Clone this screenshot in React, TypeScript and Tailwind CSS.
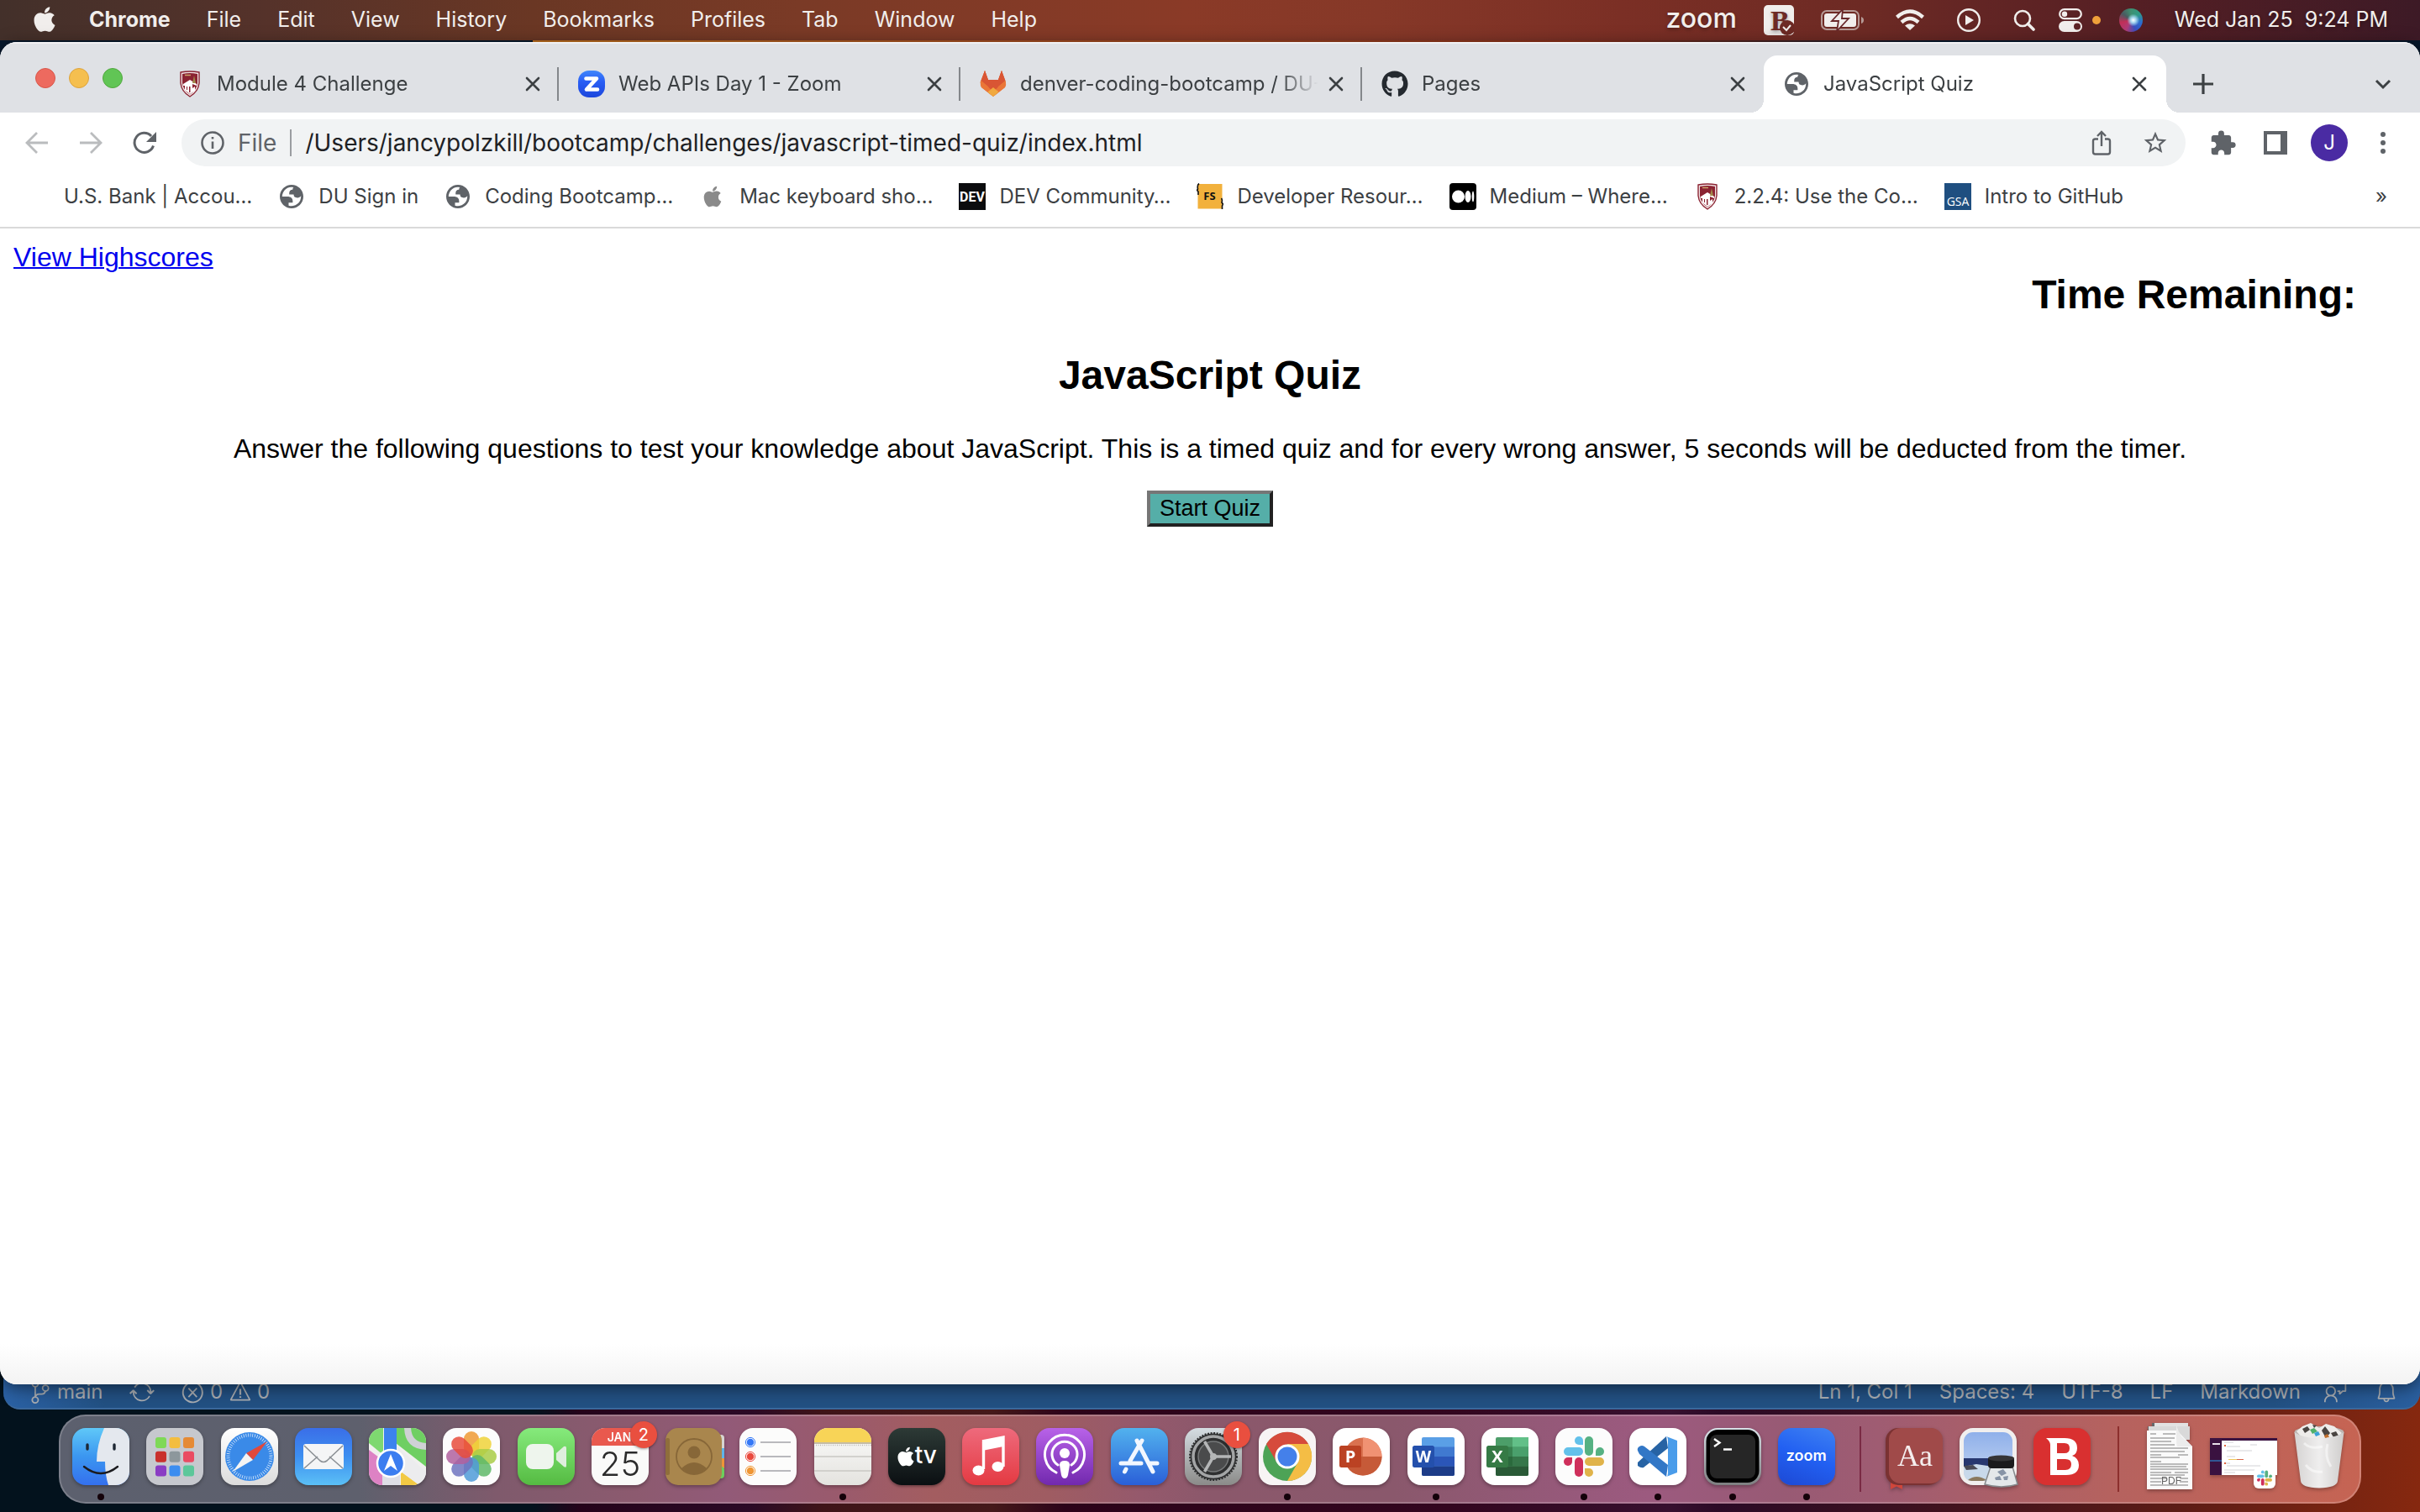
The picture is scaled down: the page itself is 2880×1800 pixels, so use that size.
import React from "react";
import { FaApple, FaGithub } from "react-icons/fa";
import { MdExtension, MdStarBorder } from "react-icons/md";
import { VscBell, VscError, VscFeedback, VscSourceControl, VscSync, VscWarning } from "react-icons/vsc";

/* ---------- small icons ---------- */

const Globe = () => (
  <svg viewBox="2 2 20 20" className="size-7" fill="#5f6368">
    <path
      fillRule="evenodd"
      d="M2 12C2 6.48 6.47 2 12 2s10 4.48 10 10-4.48 10-10 10S2 17.52 2 12zm2 0h4.4c3.407.022 4.922 1.73 4.543 5.127H9.488v2.47a8.004 8.004 0 0 0 10.498-8.083C19.327 12.504 18.332 13 17 13c-2.137 0-3.206-.916-3.206-2.75h-3.748c-.274-2.728.683-4.092 2.87-4.092 0-.975.327-1.597.811-1.97A8.004 8.004 0 0 0 4 12z"
    />
  </svg>
);

const Shield = () => (
  <svg viewBox="0 0 24 32" className="h-8 w-6">
    <path d="M1 2Q12 0 23 2V15Q22 25 12 31Q2 25 1 15Z" fill="#f3e6e6" stroke="#8b2332" strokeWidth="1.4" />
    <path d="M3 4Q12 2 21 4V15Q20 23 12 28.500Q4 23 3 15Z" fill="#8b2332" />
    <path d="M4 16L12 11L20 16V18L15 16V21L18 19V24L12 28L6 23V18L4 18Z" fill="#fff" />
    <path d="M11 19h1.500v7H11zM8 19h1v4H8z" fill="#8b2332" />
    <path d="M17 6l2 9h-4z" fill="#a08a4a" />
    <path d="M6 5.500h7" stroke="#c9a36a" strokeWidth="1.500" />
  </svg>
);

const ZoomFavicon = () => (
  <svg viewBox="0 0 32 32" className="size-8">
    <defs>
      <linearGradient id="zf" x1="0" y1="0" x2="0" y2="1">
        <stop offset="0" stopColor="#3f86fb" />
        <stop offset="0.4" stopColor="#2a5ff5" />
        <stop offset="1" stopColor="#1c46dc" />
      </linearGradient>
    </defs>
    <rect width="32" height="32" rx="13" fill="url(#zf)" />
    <path d="M9.500 9.500H22L10 22.500H23" fill="none" stroke="#fff" strokeWidth="4.600" strokeLinejoin="round" strokeLinecap="round" />
  </svg>
);

const Gitlab = () => (
  <svg viewBox="0 0 32 32" className="size-8">
    <path d="M6 0L2 12.500H10.500ZM26 0L21.500 12.500H30Z" fill="#d84f31" />
    <path d="M6 0L10 11H22L26 0L31 14L30 20L16 31L2 20L0.500 14Z" fill="#ea7638" />
    <path d="M6 0L10 11H22L26 0L30.500 12L16 25L1.500 12Z" fill="#d95534" />
    <path d="M1.500 12L10 19L16 31L2 20Q0 17 1.500 12ZM30.500 12L22 19L16 31L30 20Q32 17 30.500 12Z" fill="#ea7638" />
    <path d="M16 20L22.500 25.500L16 31L9.500 25.500Z" fill="#f0a93f" />
  </svg>
);

const DevIcon = () => (
  <svg viewBox="0 0 32 32" className="size-8">
    <rect width="32" height="32" fill="#0b0c0e" />
    <text x="16" y="22" textAnchor="middle" fill="#fff" className="font-['Roboto'] text-[16px] font-bold">
      DEV
    </text>
  </svg>
);

const FsIcon = () => (
  <svg viewBox="0 0 32 32" className="size-8">
    <rect x="1.500" y="1" width="29" height="29.500" fill="#f2b13c" />
    <path d="M3 0.500Q0.500 2 1.500 7L0.500 8.500L2 10V14M29.500 18Q31 20 30 23L31.500 25L30.500 27V31" fill="none" stroke="#111" strokeWidth="1.600" />
    <text x="15.500" y="20" textAnchor="middle" fill="#111" className="font-['Open_Sans'] text-[13px] font-bold">
      FS
    </text>
  </svg>
);

const MediumIcon = () => (
  <svg viewBox="0 0 32 32" className="size-8">
    <rect width="32" height="32" rx="4" fill="#000" />
    <circle cx="10.500" cy="16" r="7.500" fill="#fff" />
    <ellipse cx="22" cy="16" rx="3.500" ry="7" fill="#fff" />
    <ellipse cx="28" cy="16" rx="1.300" ry="6.500" fill="#fff" />
  </svg>
);

const GsaIcon = () => (
  <svg viewBox="0 0 32 32" className="size-8">
    <rect width="32" height="32" fill="#1f4f80" />
    <text x="16" y="27" textAnchor="middle" fill="#fff" className="font-['Open_Sans'] text-[14px]">
      GSA
    </text>
  </svg>
);

const Close = () => (
  <svg viewBox="0 0 20 20" className="size-5" stroke="#3c4043" strokeWidth="2.600" strokeLinecap="round">
    <path d="M3 3L17 17M17 3L3 17" />
  </svg>
);

const Arrow = ({ flip = false }: { flip?: boolean }) => (
  <svg viewBox="0 0 28 28" className="size-7" fill="none" stroke="#babcbe" strokeWidth="2.800">
    {flip ? <path d="M1 14H26M14 2L26 14L14 26" /> : <path d="M27 14H2M14 2L2 14L14 26" />}
  </svg>
);

const Reload = () => (
  <svg viewBox="0 0 28 28" className="size-7">
    <path d="M24.500 17.500A11.500 11.500 0 1 1 22 6" fill="none" stroke="#5f6368" strokeWidth="3" />
    <path d="M28 1V13H16Z" fill="#5f6368" />
  </svg>
);

const Info = () => (
  <svg viewBox="0 0 28 28" className="size-7" fill="none" stroke="#5f6368">
    <circle cx="14" cy="14" r="12.500" strokeWidth="2.600" />
    <path d="M14 12.500V21" strokeWidth="2.600" />
    <path d="M14 7V9.600" strokeWidth="2.600" />
  </svg>
);

const Share = () => (
  <svg viewBox="0 0 24 30" className="h-[30px] w-6" fill="none" stroke="#5f6368" strokeWidth="2.400">
    <path d="M8 10.500H4.500Q2 10.500 2 13V26Q2 28.500 4.500 28.500H19.500Q22 28.500 22 26V13Q22 10.500 19.500 10.500H16M12 19V2M7 7L12 2L17 7" />
  </svg>
);

/* ---------- menu bar ---------- */

const menus = ["File", "Edit", "View", "History", "Bookmarks", "Profiles", "Tab", "Window", "Help"];

const MenuBar = () => (
  <header className="flex h-12 items-center justify-between bg-[linear-gradient(90deg,#43302a_0%,#55322a_11%,#6a3724_22%,#7a3a26_33%,#8a3a27_49%,#863828_57%,#7b2f25_67%,#6d2a24_77%,#551f24_88%,#3d1a26_100%)] pr-[38px] pl-[39px] text-[25px] leading-8 text-[#f1eeec] [text-shadow:0_2px_4px_rgba(0,0,0,0.35)]">
    <nav className="flex items-center gap-[43px] pb-[2px]" aria-label="Menu bar">
      <FaApple className="-mr-1 h-[34px] w-7" />
      <button className="font-bold">Chrome</button>
      {menus.map((m) => (
        <button key={m}>{m}</button>
      ))}
    </nav>
    <div className="flex items-center">
      <span className="mr-8 flex w-20 justify-end pb-1 text-[32px] font-medium">zoom</span>
      <svg viewBox="0 0 36 36" className="mr-8 size-9">
        <rect width="36" height="36" rx="5" fill="#f1eeec" />
        <text x="8" y="30" fill="#6d2a24" className="font-['Liberation_Serif'] text-[34px] font-bold">
          B
        </text>
        <circle cx="28" cy="27" r="9" fill="#6d2a24" />
        <path d="M23 26L27 30L32 24" fill="none" stroke="#f1eeec" strokeWidth="2" />
      </svg>
      <svg viewBox="0 0 51 26" className="mr-[38px] h-[26px] w-[51px]">
        <rect x="1" y="2" width="44" height="22" rx="6" fill="none" stroke="#b59a96" strokeWidth="2" />
        <path d="M48 9Q51 10 51 13Q51 16 48 17Z" fill="#b59a96" />
        <rect x="4" y="5" width="38" height="16" rx="3" fill="#f1eeec" />
        <path d="M26 0L13 14H21L19 26L33 11H25Z" fill="#f1eeec" stroke="#68282a" strokeWidth="1.800" />
      </svg>
      <svg viewBox="0 0 34 26" className="mr-[39px] h-[26px] w-[34px]" fill="none" stroke="#f1eeec" strokeWidth="4.400">
        <path d="M1.500 9.500Q17 -4.500 32.500 9.500M7 15.500Q17 6.500 27 15.500" />
        <path d="M17 25L11 19.500Q17 15 23 19.500Z" fill="#f1eeec" stroke="none" />
      </svg>
      <svg viewBox="0 0 28 28" className="mr-[39px] size-7">
        <circle cx="14" cy="14" r="12.800" fill="none" stroke="#f1eeec" strokeWidth="2.400" />
        <path d="M10 8L20 14L10 20Z" fill="#f1eeec" />
      </svg>
      <svg viewBox="0 0 26 26" className="mr-7 size-[26px]" fill="none" stroke="#f1eeec">
        <circle cx="11" cy="11" r="9" strokeWidth="2.600" />
        <path d="M17.500 17.500L24 24" strokeWidth="3.600" strokeLinecap="round" />
      </svg>
      <svg viewBox="0 0 28 28" className="mr-3 size-7">
        <rect x="1.200" y="1.200" width="25.600" height="11" rx="5.500" fill="none" stroke="#f1eeec" strokeWidth="2.200" />
        <circle cx="7" cy="6.700" r="3.200" fill="#f1eeec" />
        <rect y="15" width="28" height="13" rx="6.500" fill="#f1eeec" />
        <circle cx="22" cy="21.500" r="4" fill="#5d2326" />
      </svg>
      <span className="mr-[22px] size-[10px] rounded-full bg-[#f0a03a]" />
      <span className="mr-[38px] size-7 rounded-full bg-[radial-gradient(circle_at_60%_50%,#ffffff_0%,#a8d8f0_14%,transparent_34%),conic-gradient(from_0deg,#3f8f70,#2f9b85,#2b6fd0,#3a4fc0,#b03c78,#c02f58,#4a5a60,#3f8f70)]" />
      <time className="pb-[2px] whitespace-pre">{"Wed Jan 25  9:24 PM"}</time>
    </div>
  </header>
);

/* ---------- browser chrome ---------- */

const tabs = [
  { title: "Module 4 Challenge", icon: <Shield /> },
  { title: "Web APIs Day 1 - Zoom", icon: <ZoomFavicon /> },
  { title: "denver-coding-bootcamp / DU-", icon: <Gitlab /> },
  { title: "Pages", icon: <FaGithub className="size-8 text-[#24292f]" />, last: true },
  { title: "JavaScript Quiz", icon: <Globe />, active: true },
];

const TabStrip = () => (
  <div className="flex h-[84px] border-t-2 border-[#f0f0f2] bg-[#dfe1e5]">
    <div className="mt-[29px] ml-[42px] flex gap-4">
      <button aria-label="Close window" className="size-6 rounded-full border border-[#d8564a] bg-[#ed6a5f]" />
      <button aria-label="Minimise window" className="size-6 rounded-full border border-[#dda33c] bg-[#f5bf4f]" />
      <button aria-label="Zoom window" className="size-6 rounded-full border border-[#51a83e] bg-[#61c555]" />
    </div>
    <div role="tablist" className="mt-[14px] ml-[41px] flex w-[2391px] shrink">
      {tabs.map((t) => (
        <div
          key={t.title}
          className={
            t.active
              ? "relative flex min-w-0 flex-1 items-center rounded-t-2xl bg-white pr-[22px] pl-[23px]"
              : "relative flex min-w-0 flex-1 items-center pr-[21px] pl-[23px]"
          }
        >
          {t.active && (
            <>
              <span className="absolute bottom-0 -left-4 size-4 bg-[radial-gradient(circle_at_0_0,transparent_16px,#fff_16px)]" />
              <span className="absolute -right-4 bottom-0 size-4 bg-[radial-gradient(circle_at_100%_0,transparent_16px,#fff_16px)]" />
            </>
          )}
          <button role="tab" aria-selected={!!t.active} className="flex min-w-0 flex-1 items-center gap-4 text-left">
            <span className="flex w-8 shrink-0 justify-center">{t.icon}</span>
            <span className="min-w-0 flex-1 overflow-hidden text-[24px] leading-8 whitespace-nowrap text-[#3c4043] [mask-image:linear-gradient(90deg,#000_86%,transparent_99%)]">
              {t.title}
            </span>
          </button>
          <button aria-label={"Close " + t.title} className="ml-2">
            <Close />
          </button>
          {!t.active && !t.last && <span className="absolute right-0 h-10 w-[2px] bg-[#84878b]" />}
        </div>
      ))}
    </div>
    <div className="mt-[14px] flex flex-1 items-center justify-between pr-[34px] pl-8">
      <button aria-label="New tab">
        <svg viewBox="0 0 24 24" className="size-6" stroke="#3c4043" strokeWidth="3.200">
          <path d="M0 12H24M12 0V24" />
        </svg>
      </button>
      <button aria-label="Search tabs">
        <svg viewBox="0 0 20 20" className="size-5" fill="none" stroke="#3c4043" strokeWidth="3">
          <path d="M2 6L10 14L18 6" />
        </svg>
      </button>
    </div>
  </div>
);

const Toolbar = () => (
  <div className="flex h-[72px] items-center bg-white">
    <button aria-label="Back" className="ml-[30px]">
      <Arrow />
    </button>
    <button aria-label="Forward" className="ml-9">
      <Arrow flip />
    </button>
    <button aria-label="Reload" className="ml-9">
      <Reload />
    </button>
    <div className="ml-[30px] flex h-14 flex-1 items-center rounded-full bg-[#f1f3f4] pr-5 pl-[23px] text-[28px]">
      <Info />
      <label htmlFor="address" className="ml-4 text-[#5f6368]">
        File
      </label>
      <span className="mx-4 h-8 w-[2px] bg-[#9a9da1]" />
      <input id="address" className="min-w-0 flex-1 bg-transparent text-[#202124] outline-none" defaultValue="/Users/jancypolzkill/bootcamp/challenges/javascript-timed-quiz/index.html" />
      <button aria-label="Share">
        <Share />
      </button>
      <button aria-label="Bookmark" className="ml-9">
        <MdStarBorder className="size-8 text-[#5f6368]" />
      </button>
    </div>
    <button aria-label="Extensions" className="ml-7">
      <MdExtension className="size-[33px] text-[#5f6368]" />
    </button>
    <button aria-label="Side panel" className="ml-8">
      <span className="block h-7 w-7 border-4 border-r-8 border-[#5f6368]" />
    </button>
    <button aria-label="Profile" className="ml-7 flex size-11 items-center justify-center rounded-full bg-[#4a2ba3] text-[24px] text-white">
      J
    </button>
    <button aria-label="Menu" className="mr-[41px] ml-[39px] flex flex-col gap-1">
      <span className="size-[6px] rounded-full bg-[#5f6368]" />
      <span className="size-[6px] rounded-full bg-[#5f6368]" />
      <span className="size-[6px] rounded-full bg-[#5f6368]" />
    </button>
  </div>
);

const bookmarks = [
  { title: "U.S. Bank | Accou…", icon: null },
  { title: "DU Sign in", icon: <Globe /> },
  { title: "Coding Bootcamp…", icon: <Globe /> },
  { title: "Mac keyboard sho…", icon: <FaApple className="size-7 text-[#8a8a8a]" /> },
  { title: "DEV Community…", icon: <DevIcon /> },
  { title: "Developer Resour…", icon: <FsIcon /> },
  { title: "Medium – Where…", icon: <MediumIcon /> },
  { title: "2.2.4: Use the Co…", icon: <Shield /> },
  { title: "Intro to GitHub", icon: <GsaIcon /> },
];

const BookmarksBar = () => (
  <div className="flex h-[66px] items-center border-b-2 border-[#dadada] bg-white pb-2 pl-7 text-[24px] leading-8 text-[#3c4043]">
    <nav className="flex flex-1 gap-[31px] whitespace-nowrap" aria-label="Bookmarks">
      {bookmarks.map((b) => (
        <a key={b.title} href="#" className="flex items-center gap-4">
          <span className="flex w-8 justify-center">{b.icon}</span>
          {b.title}
        </a>
      ))}
    </nav>
    <button aria-label="More bookmarks" className="mr-[39px]">
      »
    </button>
  </div>
);

const Page = () => (
  <main className="flex flex-1 flex-col bg-[linear-gradient(0deg,#f3f3f3_0px,#fff_48px)] p-4 font-['Liberation_Sans',Arial,sans-serif] text-[32px] leading-9 text-black">
    <a href="#" className="self-start text-[#0000ee] underline decoration-2">
      View Highscores
    </a>
    <h2 className="mr-[60px] self-end text-[48px] leading-[54px] font-bold">Time Remaining:</h2>
    <h2 className="mt-[42px] self-center text-[48px] leading-[54px] font-bold">JavaScript Quiz</h2>
    <p className="mt-[42px] self-center">
      Answer the following questions to test your knowledge about JavaScript. This is a timed quiz and for every wrong answer, 5 seconds will be deducted from the timer.
    </p>
    <button className="mt-8 self-center border-4 border-t-[#767676] border-r-[#212121] border-b-[#212121] border-l-[#767676] bg-[#55aea8] px-[11px] py-[2px] text-[27px] leading-[31px]">
      Start Quiz
    </button>
  </main>
);

/* ---------- editor status bar peeking out under the browser ---------- */

const StatusBar = () => (
  <footer className="-mt-[30px] ml-1 flex h-[60px] items-end justify-between rounded-b-[20px] border-b-2 border-[#3a689c] bg-[linear-gradient(90deg,#2b62a6_0px,#225082_120px,#225082_2700px,#2a5f9f_100%)] pr-[26px] pb-[3px] pl-[30px] text-[24px] leading-8 text-[#a9adb2]">
    <div className="flex items-center">
      <VscSourceControl className="size-7" />
      <span className="ml-[6px] w-[86px]">main</span>
      <VscSync className="mr-[31px] size-[30px]" />
      <VscError className="size-[29px]" />
      <span className="ml-[6px] w-[22px]">0</span>
      <VscWarning className="size-7" />
      <span className="ml-[6px]">0</span>
    </div>
    <div className="flex items-center gap-8">
      <span>Ln 1, Col 1</span>
      <span>Spaces: 4</span>
      <span>UTF-8</span>
      <span>LF</span>
      <span className="-mr-1">Markdown</span>
      <VscFeedback className="size-7" />
      <VscBell className="size-7" />
    </div>
  </footer>
);

/* ---------- dock ---------- */

const Tile = ({ children, fill, stops, id }: { children?: React.ReactNode; fill?: string; stops?: string[]; id: string }) => (
  <svg viewBox="0 0 68 68" className="size-[68px] shrink-0 overflow-visible drop-shadow-[0_2px_2px_rgba(0,0,0,0.3)]">
    <defs>
      <clipPath id={id + "c"}>
        <rect width="68" height="68" rx="16" />
      </clipPath>
      {stops && (
        <linearGradient id={id} x1="0" y1="0" x2="0" y2="1">
          {stops.map((s, i) => (
            <stop key={s} offset={i / (stops.length - 1)} stopColor={s} />
          ))}
        </linearGradient>
      )}
    </defs>
    <g clipPath={`url(#${id}c)`}>
      <rect width="68" height="68" fill={stops ? `url(#${id})` : fill} />
      {children}
    </g>
  </svg>
);

const SlackMark = () => (
  <>
    <g fill="#63c1ea">
      <path d="M33 20H28A5 5 0 1 1 33 15Z" />
      <rect x="10" y="23" width="23" height="10" rx="5" />
    </g>
    <g fill="#56b183">
      <rect x="35" y="10" width="10" height="23" rx="5" />
      <path d="M48 33V28A5 5 0 1 1 53 33Z" />
    </g>
    <g fill="#e0b34a">
      <rect x="35" y="35" width="23" height="10" rx="5" />
      <path d="M35 48H40A5 5 0 1 1 35 53Z" />
    </g>
    <g fill="#cf2f5b">
      <path d="M20 35V40A5 5 0 1 1 15 35Z" />
      <rect x="23" y="35" width="10" height="23" rx="5" />
    </g>
  </>
);

const Finder = () => (
  <Tile id="finder" stops={["#5fc8f8", "#3b96f0", "#3470ee"]}>
    <path d="M38 0Q29 20 29 40H39Q39 56 43 68H68V0Z" fill="#e4e8ee" />
    <path d="M18 20V25M50 20V25" stroke="#1d2733" strokeWidth="3.400" strokeLinecap="round" />
    <path d="M14 46Q34 62 54 46" fill="none" stroke="#1b1b1f" strokeWidth="2.400" strokeLinecap="round" />
  </Tile>
);

const padColors = ["#7ed957", "#f3bd3f", "#e58a35", "#c9302c", "#8d979c", "#ea4b62", "#8a3cc4", "#3b8df0", "#5cc79a"];
const Launchpad = () => (
  <Tile id="pad" fill="#c6c8ce">
    {padColors.map((c, i) => (
      <rect key={c} x={11 + (i % 3) * 16.5} y={11 + Math.floor(i / 3) * 16.8} width="13" height="13" rx="3" fill={c} />
    ))}
  </Tile>
);

const Safari = () => (
  <Tile id="safari" stops={["#ffffff", "#dcdcdc"]}>
    <circle cx="34" cy="34" r="29" fill="#3a8ae8" />
    <circle cx="34" cy="34" r="25.500" fill="none" stroke="#d7e8fb" strokeWidth="4" strokeDasharray="0.800 1.870" />
    <path d="M55 16L38 38L30 30Z" fill="#e0483c" />
    <path d="M14 52L38 38L30 30Z" fill="#f4f4f4" />
  </Tile>
);

const Mail = () => (
  <Tile id="mail" stops={["#3a6ee8", "#3d8ff0", "#5bc0f6"]}>
    <rect x="10" y="19" width="48" height="30" rx="3" fill="#f4f5f6" />
    <path d="M11 48L27 34M57 48L41 34M11 21L30 39Q34 42 38 39L57 21" fill="none" stroke="#8b9095" strokeWidth="1.600" />
  </Tile>
);

const Maps = () => (
  <Tile id="maps" fill="#f0f0ee">
    <path d="M32 0H68V46L32 18Z" fill="#6fcf62" />
    <path d="M0 8V0H17V32L0 18Z" fill="#7ed870" />
    <path d="M0 26L16 38V68H0Z" fill="#dd82c4" />
    <path d="M38 68V52L60 68Z" fill="#f2c944" />
    <path d="M34 22L68 52V68H60L34 48Z" fill="#ececee" />
    <path d="M46 -2Q46 22 70 22" fill="none" stroke="#cfd1d5" strokeWidth="8" />
    <rect x="18" width="15" height="36" fill="#3c82ee" />
    <rect x="16" y="50" width="21" height="18" fill="#dedee6" />
    <circle cx="26" cy="42" r="16" fill="#3b7df0" stroke="#fff" strokeWidth="2.500" />
    <path d="M26 31L34 51L26 45L18 51Z" fill="#fff" />
  </Tile>
);

const petals = ["#ef9a35", "#efd23a", "#a9cc46", "#5fb868", "#4f9bd8", "#6f74c0", "#b0609f", "#e84c3c"];
const Photos = () => (
  <Tile id="photos" fill="#fcfcfc">
    {petals.map((c, i) => (
      <rect key={c} x="25" y="4" width="18" height="29" rx="9" fill={c} fillOpacity="0.850" transform={`rotate(${i * 45} 34 34)`} />
    ))}
  </Tile>
);

const Facetime = () => (
  <Tile id="ft" stops={["#86ea7c", "#55bb42"]}>
    <rect x="10" y="19" width="33" height="30" rx="8" fill="#eef5ed" />
    <path d="M46 30L55 22Q58 21 58 24V45Q58 48 55 46L46 38Z" fill="#dfeedd" />
  </Tile>
);

const Calendar = () => (
  <Tile id="cal" fill="#fafaf9">
    <rect width="68" height="21" fill="#e9594e" />
    <text x="33" y="16" textAnchor="middle" fill="#fff" className="font-['Inter'] text-[14px] font-semibold">
      JAN
    </text>
    <text x="34" y="57" textAnchor="middle" fill="#2b2b2b" className="font-['Inter'] text-[40px] font-light">
      25
    </text>
  </Tile>
);

const Contacts = () => (
  <svg viewBox="0 0 68 68" className="size-[68px] overflow-visible drop-shadow-[0_2px_2px_rgba(0,0,0,0.3)]">
    <rect x="56" y="8" width="14" height="26" rx="4" fill="#d7d5d2" />
    <rect x="56" y="24" width="14" height="12" fill="#5fb4ea" />
    <rect x="56" y="36" width="14" height="12" fill="#ee9438" />
    <rect x="56" y="46" width="14" height="14" rx="4" fill="#6ccf5c" />
    <rect width="67" height="68" rx="15" fill="#a9864d" />
    <rect width="5" height="44" y="12" rx="2" fill="#8f6e3b" />
    <circle cx="34" cy="34" r="21" fill="none" stroke="#876738" strokeWidth="1.800" />
    <circle cx="34" cy="29" r="7.500" fill="#876738" />
    <path d="M19 48Q34 34 49 48Q34 62 19 48Z" fill="#876738" />
  </svg>
);

const Reminders = () => (
  <Tile id="rem" fill="#fcfcfb">
    {["#3478f6", "#e9493d", "#ef9634"].map((c, i) => (
      <g key={c}>
        <circle cx="13" cy={17 + i * 17} r="5" fill={c} stroke="#fff" strokeWidth="1.500" />
        <circle cx="13" cy={17 + i * 17} r="5.600" fill="none" stroke={c} />
        <path d={`M25 ${17 + i * 17}H61`} stroke="#b9b9bd" strokeWidth="1.800" />
      </g>
    ))}
  </Tile>
);

const Notes = () => (
  <Tile id="notes" stops={["#fbfbfa", "#e4e3df"]}>
    <rect width="68" height="17" fill="#f8d457" />
    <path d="M0 18H68" stroke="#b5a98a" strokeWidth="1.500" />
    <path d="M2 20.500H68" stroke="#bbb9b2" strokeWidth="1.500" strokeDasharray="1 1.500" />
    <path d="M0 34H68M0 51H68" stroke="#c9c8c4" strokeWidth="1.500" />
  </Tile>
);

const AppleTv = () => (
  <span className="flex size-[68px] items-center justify-center rounded-2xl bg-[linear-gradient(#2d3a36,#0b0f12)] text-white shadow-[0_2px_3px_rgba(0,0,0,0.3)]">
    <FaApple className="h-[26px] w-[22px]" />
    <span className="pb-1 text-[28px] leading-8 font-medium">tv</span>
  </span>
);

const Music = () => (
  <Tile id="music" stops={["#ee6a7c", "#e43a42"]}>
    <path d="M24 16L49 11V46M25.500 49V16" stroke="#fff" strokeWidth="3.400" fill="none" />
    <path d="M24 15L49 10.500V22L24 27Z" fill="#fff" />
    <ellipse cx="19.500" cy="50.500" rx="7" ry="6" fill="#fff" />
    <ellipse cx="42.500" cy="46" rx="7" ry="6" fill="#fff" />
  </Tile>
);

const Podcasts = () => (
  <Tile id="pod" stops={["#b862e8", "#7229ae"]}>
    <g fill="none" stroke="#fff" strokeWidth="3" strokeLinecap="round">
      <path d="M24 53A23.500 23.500 0 1 1 44 53" />
      <path d="M26 44A15 15 0 1 1 42 44" />
    </g>
    <circle cx="34" cy="30" r="6" fill="#fff" />
    <path d="M28 44Q28 39 34 39Q40 39 40 44L38 56Q37 60 34 60Q31 60 30 56Z" fill="#fff" />
  </Tile>
);

const AppStore = () => (
  <Tile id="as" stops={["#52b2ee", "#2a5fd8"]}>
    <g stroke="#f2f7ff" strokeWidth="5" strokeLinecap="round">
      <path d="M37 15L23 39M31 15L50 52M12 42H36M47 42H55M18 49L16.500 52" />
    </g>
  </Tile>
);

const Settings = () => (
  <Tile id="set" stops={["#d5dde2", "#8b8b89"]}>
    <circle cx="34" cy="34" r="27.500" fill="#2e2f30" stroke="#2e2f30" strokeWidth="3" strokeDasharray="2 1.500" />
    <circle cx="34" cy="34" r="24" fill="none" stroke="#a3a5a6" strokeWidth="3.500" />
    <circle cx="34" cy="34" r="18" fill="#4a4b4c" stroke="#77797a" strokeWidth="1.500" />
    <path d="M34 34H55M34 34L23.500 16M34 34L23.500 52" stroke="#b4b6b7" strokeWidth="3.500" />
    <circle cx="34" cy="34" r="4" fill="#b4b6b7" />
  </Tile>
);

const Chrome = () => (
  <Tile id="chrome" fill="#f7f4f4">
    <circle cx="34" cy="34" r="29" fill="#4da356" />
    <path d="M34 19H59A29 29 0 0 0 9 19.300L21.500 41Z" fill="#d64b3c" />
    <path d="M46.500 41L34 63A29 29 0 0 0 59 19H34Z" fill="#f4bd45" />
    <circle cx="34" cy="34" r="14.500" fill="#fff" />
    <circle cx="34" cy="34" r="11.500" fill="#4480ea" />
  </Tile>
);

const PowerPoint = () => (
  <Tile id="ppt" fill="#fff">
    <circle cx="36" cy="34" r="22.500" fill="#d9714f" />
    <path d="M36 11.500A22.500 22.500 0 0 1 58.500 34H36Z" fill="#f09273" />
    <path d="M13.500 34H58.500A22.500 22.500 0 0 1 13.500 34Z" fill="#c65a38" />
    <rect x="8" y="21" width="26" height="26" rx="2.500" fill="#bb4223" />
    <text x="21" y="41" textAnchor="middle" fill="#fff" className="font-['Open_Sans'] text-[20px] font-bold">
      P
    </text>
  </Tile>
);

const Word = () => (
  <Tile id="word" fill="#fff">
    <rect x="17" y="11" width="39" height="46" rx="2" fill="#5a9fe6" />
    <rect x="17" y="22.500" width="39" height="11.500" fill="#4079d0" />
    <rect x="17" y="34" width="39" height="11.500" fill="#2b56b8" />
    <path d="M17 45.500H56V55Q56 57 54 57H19Q17 57 17 55Z" fill="#1d3c88" />
    <rect x="6" y="21" width="26" height="26" rx="2.500" fill="#2450ac" />
    <text x="19" y="41" textAnchor="middle" fill="#fff" className="font-['Open_Sans'] text-[19px] font-bold">
      W
    </text>
  </Tile>
);

const Excel = () => (
  <Tile id="excel" fill="#fff">
    <rect x="17" y="11" width="39" height="46" rx="2" fill="#4c9e69" />
    <rect x="37" y="11" width="19" height="11.500" fill="#62c088" />
    <rect x="37" y="22.500" width="19" height="11.500" fill="#4aa06c" />
    <rect x="17" y="22.500" width="20" height="11.500" fill="#38814f" />
    <rect x="37" y="34" width="19" height="11.500" fill="#36774a" />
    <rect x="17" y="34" width="20" height="11.500" fill="#2b6a3d" />
    <path d="M17 45.500H56V55Q56 57 54 57H19Q17 57 17 55Z" fill="#2a5a37" />
    <rect x="6" y="21" width="26" height="26" rx="2.500" fill="#357a45" />
    <text x="19" y="41" textAnchor="middle" fill="#fff" className="font-['Open_Sans'] text-[20px] font-bold">
      X
    </text>
  </Tile>
);

const Slack = () => (
  <Tile id="slack" fill="#fcfcfc">
    <SlackMark />
  </Tile>
);

const VsCode = () => (
  <Tile id="vsc" fill="#fff">
    <path d="M10 41L44 10L46 24L17 47Q14 48 10 45Z" fill="#2763a4" />
    <path d="M10 27Q9 24 12 22Q15 20 18 22L46 44L44 58L12 31Z" fill="#3277c6" />
    <path d="M44 10L57 15V53L44 58Q46 57 46 54V14Q46 11 44 10Z" fill="#4a9cea" />
  </Tile>
);

const Terminal = () => (
  <Tile id="term" stops={["#d8e2e8", "#7d7e80"]}>
    <rect x="2.500" y="2" width="63" height="63" rx="14" fill="#000" />
    <rect x="7" y="8" width="54" height="52" rx="8" fill="#262626" />
    <path d="M12 13L18.500 17.500L12 22" fill="none" stroke="#fff" strokeWidth="2.400" />
    <path d="M23 25.500H33" stroke="#fff" strokeWidth="2.400" />
  </Tile>
);

const ZoomApp = () => (
  <span className="flex size-[68px] items-center justify-center rounded-2xl bg-[linear-gradient(20deg,#1d49d4,#2260f2_50%,#3f82f2)] pb-1 text-[18px] font-semibold text-white shadow-[0_2px_3px_rgba(0,0,0,0.3)]">
    zoom
  </span>
);

const Dictionary = () => (
  <svg viewBox="0 0 68 68" className="size-[68px] overflow-visible drop-shadow-[0_2px_2px_rgba(0,0,0,0.3)]">
    <path d="M6 62H20V73L13 69.500L6 73Z" fill="#cf463b" />
    <rect width="66" height="68" rx="15" fill="#7a3232" />
    <rect x="4" width="64" height="66" rx="14" fill="#a04a49" />
    <text x="35" y="45" textAnchor="middle" fill="#f5eeee" className="font-['Liberation_Serif'] text-[36px]">
      Aa
    </text>
  </svg>
);

const Preview = () => (
  <svg viewBox="0 0 68 68" className="size-[68px] overflow-visible drop-shadow-[0_2px_2px_rgba(0,0,0,0.3)]">
    <defs>
      <linearGradient id="sky" x1="0" y1="0" x2="0" y2="1">
        <stop offset="0" stopColor="#8fb0ea" />
        <stop offset="1" stopColor="#c5d6f2" />
      </linearGradient>
    </defs>
    <rect width="68" height="68" rx="16" fill="#f1efee" />
    <rect x="5" y="5" width="58" height="58" rx="11" fill="url(#sky)" />
    <path d="M5 36H63V52Q63 63 52 63H16Q5 63 5 52Z" fill="#c8d9ea" />
    <path d="M5 36H63V44L40 46L20 43L5 46Z" fill="#27376f" />
    <path d="M5 45L16 44L22 49L8 50Z" fill="#4a4a55" />
    <path d="M10 62Q20 54 32 62L28 63H14Z" fill="#8b7a5e" />
    <path d="M37 46L30 67Q50 73 69 67L63 46Z" fill="#e4e8ea" stroke="#85898c" strokeWidth="1.500" />
    <path d="M45 52L52 49L56 54L50 57ZM42 59L48 57L50 62L43 62ZM52 58L58 57L57 62H53Z" fill="#8794a6" />
    <rect x="34" y="34" width="31" height="14" rx="4" fill="#1b1b1d" />
    <ellipse cx="49.500" cy="36" rx="15.500" ry="3.500" fill="#353537" />
  </svg>
);

const Bitdefender = () => (
  <Tile id="bit" fill="#d93030">
    <path
      fillRule="evenodd"
      d="M15 12H37Q52 12 52 24Q52 31 46 33Q54 36 54 44Q54 56 39 56H20V20Q20 16 15 12ZM28 18V30H37Q43 30 43 24Q43 18 37 18ZM28 37V50H38Q45 50 45 43Q45 37 38 37Z"
      fill="#fff"
    />
  </Tile>
);

const PdfStack = () => (
  <svg viewBox="0 0 56 80" className="-my-[6px] h-20 w-14 drop-shadow-[0_2px_2px_rgba(0,0,0,0.3)]">
    <path d="M7 0H50V20H7Z" fill="#e2e2e2" />
    <path d="M7 0H10V4H7ZM2 4H6V8H2Z" fill="#66686a" />
    <path d="M3 4H52V20H3Z" fill="#d9d9d9" />
    <path d="M1 9H37L55 28V79H1Z" fill="#fafafa" />
    <g stroke="#a6a6a6" strokeWidth="1.400">
      <path d="M5 13H12M20 13H35M5 18H34M5 22H30M5 26H34M5 30H50M5 34H46M5 38H18M38 38H50M5 41H40M5 46H18M5 49H50M5 52H48M5 55H50M5 59H30M34 59H50M5 62H46M5 66H24M40 66H50M5 70H18M40 70H50M5 74H50" />
    </g>
    <path d="M36 1Q37 8 42 16L55 28H37Q36 24 36 18Z" fill="#ececec" />
    <text x="18" y="73" fill="#666" className="font-['Liberation_Sans'] text-[12px]">
      PDF
    </text>
  </svg>
);

const SlackWindow = () => (
  <svg viewBox="0 0 80 68" className="h-[68px] w-20 overflow-visible drop-shadow-[0_2px_2px_rgba(0,0,0,0.25)]">
    <rect y="12" width="80" height="44" fill="#fff" />
    <path d="M0 12H80V15H14V56H0Z" fill="#3a1240" />
    <path d="M3 19H12" stroke="#e8e0ea" strokeWidth="2" />
    <path d="M0 39H14" stroke="#2f6fb0" strokeWidth="1.500" />
    <path d="M17 17H28M20 22H36M20 27H50M20 34H30M17 42H24M48 20H56M20 45H60M17 50H60M17 53H30" stroke="#d3d3d6" />
    <path d="M17 21h2M17 42h2" stroke="#e0653f" strokeWidth="2" />
    <path d="M22 37.500H32" stroke="#efc95c" />
    <path d="M32 37.500H40" stroke="#d8644a" />
    <rect x="52" y="47" width="26" height="25" rx="6" fill="#fff" />
    <svg x="53" y="47.500" width="24" height="24" viewBox="2 2 64 64">
      <SlackMark />
    </svg>
  </svg>
);

const Trash = () => (
  <svg viewBox="0 0 60 80" className="-my-[6px] h-20 w-[60px] overflow-visible drop-shadow-[0_2px_2px_rgba(0,0,0,0.3)]">
    <defs>
      <linearGradient id="bin" x1="0" y1="0" x2="1" y2="0">
        <stop offset="0" stopColor="#d5d3d2" />
        <stop offset="0.500" stopColor="#efeeee" />
        <stop offset="1" stopColor="#cfcdcc" />
      </linearGradient>
    </defs>
    <ellipse cx="30" cy="11" rx="29.500" ry="7" fill="#bdb6b3" />
    <path d="M3 10L10 4L20 0L30 6L38 1L48 4L57 12L50 18L30 20L10 18Z" fill="#eeecea" />
    <path d="M10 7l6-3 3 4-6 4zM33 9l4-5 6 8-5 6zM44 12l6-2 3 5-6 2zM22 2l5 1-3 3z" fill="#4a4542" />
    <path d="M19 8l5-2 4 4-6 3z" fill="#4fb06a" />
    <path d="M24 12l5-2 2 4-5 2z" fill="#3aa0d8" />
    <path d="M36 15l4-2 2 4-5 1z" fill="#c2702e" />
    <path d="M0.500 11Q10 18 30 18.500Q50 18 59.500 11L52 69Q51 77 30 77.500Q9 77 8 69Z" fill="url(#bin)" />
    <path d="M12 24Q20 32 34 28M40 25Q36 40 44 52M14 50Q22 60 34 58" fill="none" stroke="#fff" strokeOpacity="0.500" strokeWidth="3" />
  </svg>
);

type App = { name: string; icon: React.ReactNode; dot?: boolean; badge?: string };

const apps: App[] = [
  { name: "Finder", icon: <Finder />, dot: true },
  { name: "Launchpad", icon: <Launchpad /> },
  { name: "Safari", icon: <Safari /> },
  { name: "Mail", icon: <Mail /> },
  { name: "Maps", icon: <Maps /> },
  { name: "Photos", icon: <Photos /> },
  { name: "FaceTime", icon: <Facetime /> },
  { name: "Calendar", icon: <Calendar />, badge: "2" },
  { name: "Contacts", icon: <Contacts /> },
  { name: "Reminders", icon: <Reminders /> },
  { name: "Notes", icon: <Notes />, dot: true },
  { name: "TV", icon: <AppleTv /> },
  { name: "Music", icon: <Music /> },
  { name: "Podcasts", icon: <Podcasts /> },
  { name: "App Store", icon: <AppStore /> },
  { name: "System Settings", icon: <Settings />, badge: "1" },
  { name: "Google Chrome", icon: <Chrome />, dot: true },
  { name: "PowerPoint", icon: <PowerPoint /> },
  { name: "Word", icon: <Word />, dot: true },
  { name: "Excel", icon: <Excel /> },
  { name: "Slack", icon: <Slack />, dot: true },
  { name: "Visual Studio Code", icon: <VsCode />, dot: true },
  { name: "Terminal", icon: <Terminal />, dot: true },
  { name: "Zoom", icon: <ZoomApp />, dot: true },
];

const recent: App[] = [
  { name: "Dictionary", icon: <Dictionary /> },
  { name: "Preview", icon: <Preview /> },
  { name: "Bitdefender", icon: <Bitdefender /> },
];

const files: App[] = [
  { name: "Documents", icon: <PdfStack /> },
  { name: "Slack window", icon: <SlackWindow /> },
  { name: "Trash", icon: <Trash /> },
];

const DockItem = ({ app }: { app: App }) => (
  <button aria-label={app.name} className="relative flex flex-col items-center gap-[10px]">
    {app.icon}
    <span className={app.dot ? "size-2 rounded-full bg-[#14020a]" : "size-2"} />
    {app.badge && (
      <span className="absolute -top-2 -right-[10px] flex size-8 items-center justify-center rounded-full bg-[#e94f3f] text-[20px] leading-8 text-white shadow-[0_1px_3px_rgba(0,0,0,0.4)]">
        {app.badge}
      </span>
    )}
  </button>
);

const Dock = () => (
  <nav
    aria-label="Dock"
    className="mx-[70px] mt-[6px] mb-[10px] flex h-[106px] rounded-[32px] border-2 border-white/20 bg-[linear-gradient(90deg,#5c606e_0%,#5e606d_13%,#7f5a6c_19%,#8c5a6f_25%,#925a78_29%,#9a5a6c_34%,#a35d60_38%,#9f5c62_43%,#95596c_47%,#8b586b_50%,#8a586c_58%,#97597b_66%,#9c5a7f_69%,#985a74_75%,#9f5c72_79%,#aa5f68_84%,#b5625f_89%,#c66453_100%)] bg-origin-border pt-[14px] pr-[18px] pl-[14px]"
  >
    <div className="flex flex-1 items-start justify-between">
      {apps.map((a) => (
        <DockItem key={a.name} app={a} />
      ))}
    </div>
    <span className="mx-[29px] -mt-[2px] h-[78px] w-[2px] bg-[#7a2a44]" />
    <div className="flex items-start gap-5">
      {recent.map((a) => (
        <DockItem key={a.name} app={a} />
      ))}
    </div>
    <span className="mx-8 -mt-[2px] h-[78px] w-[2px] bg-[#8c2f2e]" />
    <div className="flex items-start gap-5">
      {files.map((a) => (
        <DockItem key={a.name} app={a} />
      ))}
    </div>
  </nav>
);

export default function App() {
  return (
    <div className="flex min-h-screen flex-col bg-[linear-gradient(90deg,#03121d_0%,#03121d_22%,#25031a_24%,#2b0a26_31%,#3f1418_34%,#45191a_41%,#2c0319_44%,#33061f_60%,#37102f_69%,#2b0a26_71%,#3a1020_78%,#5c1c16_90%,#86280f_100%)] font-['Inter',sans-serif]">
      <MenuBar />
      <div className="-mb-5 h-[22px] bg-[linear-gradient(90deg,#06172b_0%,#06172b_22%,#c0701f_22%,#a85020_40%,#8a2f18_65%,#06172b_80%)]" />
      <section className="relative z-10 flex flex-1 flex-col overflow-hidden rounded-[20px] bg-white shadow-[0_4px_20px_rgba(0,0,0,0.5)]">
        <TabStrip />
        <Toolbar />
        <BookmarksBar />
        <Page />
      </section>
      <StatusBar />
      <Dock />
    </div>
  );
}
